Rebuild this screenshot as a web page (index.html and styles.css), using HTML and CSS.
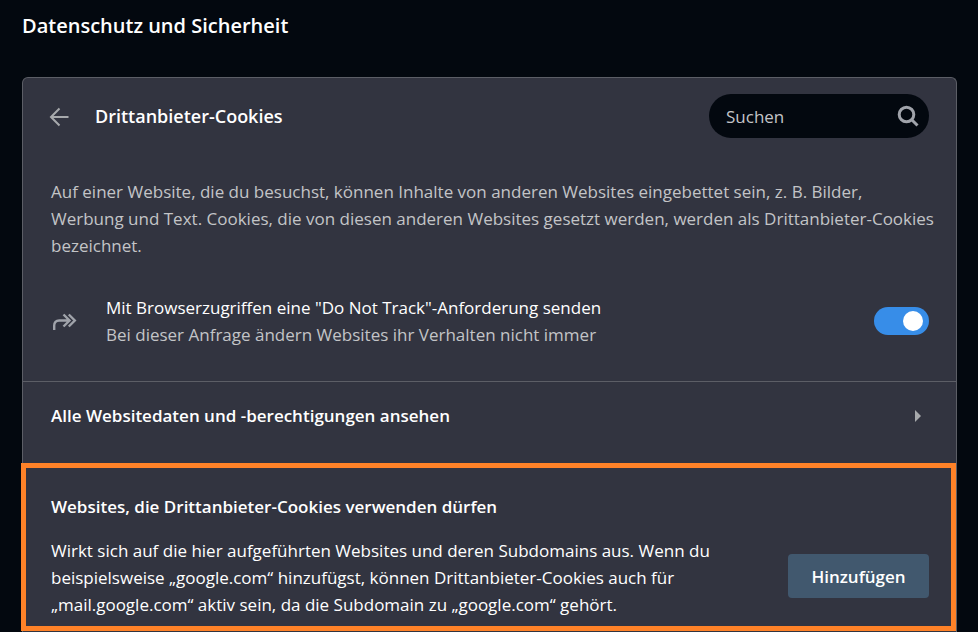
FILE: index.html
```html
<!DOCTYPE html>
<html lang="de">
    <head>
        <meta charset="utf-8">
        <meta name="viewport" content="width=device-width, initial-scale=1">
        <title>Datenschutz und Sicherheit</title>
        <link rel="stylesheet" href="styles.css">
    </head>
    <body>
        <main>
            <h1 class="title">Datenschutz und Sicherheit</h1>
            <div class="card">
                <div class="card-header">
                    <button class="back" type="button" aria-label="Zurück">
                        <svg width="20" height="22" viewBox="0 0 20 22">
                            <path d="M10.500 3.500L2 12L10.500 20.500M2 12H19.500"/>
                        </svg>
                    </button>
                    <h2 class="card-title">Drittanbieter-Cookies</h2>
                    <div class="search">
                        <input class="search-input" type="search" placeholder="Suchen" aria-label="Suchen">
                        <svg class="search-icon" width="22" height="22" viewBox="0 0 22 22">
                            <circle cx="9.500" cy="9.500" r="7.300"/>
                            <path d="M14.500 14.500L20.500 20.500"/>
                        </svg>
                    </div>
                </div>

                <p class="intro">Auf einer Website, die du besuchst, können Inhalte von anderen Websites eingebettet sein, z. B. Bilder, Werbung und Text. Cookies, die von diesen anderen Websites gesetzt werden, werden als Drittanbieter-Cookies bezeichnet.</p>

                <div class="setting">
                    <svg class="setting-icon" width="26" height="20" viewBox="0 0 26 20">
                        <path d="M3.200 19V14.500Q3.200 9.500 8.200 9.500H18M12.500 3.500L18.500 9.500L12.500 15.500M17.800 3.500L23.800 9.500L17.800 15.500"/>
                    </svg>
                    <label class="setting-text" for="do-not-track">
                        <span class="setting-name">Mit Browserzugriffen eine "Do Not Track"-Anforderung senden</span>
                        <span class="setting-hint">Bei dieser Anfrage ändern Websites ihr Verhalten nicht immer</span>
                    </label>
                    <input id="do-not-track" class="toggle" type="checkbox" checked>
                </div>

                <a class="link-row" href="#websitedaten">
                    Alle Websitedaten und -berechtigungen ansehen
                    <svg width="6" height="12" viewBox="0 0 6 12">
                        <path d="M0 0L6 6L0 12Z"/>
                    </svg>
                </a>

                <section class="allowed">
                    <h3 class="allowed-title">Websites, die Drittanbieter-Cookies verwenden dürfen</h3>
                    <div class="allowed-body">
                        <p class="allowed-text">Wirkt sich auf die hier aufgeführten Websites und deren Subdomains aus. Wenn du beispielsweise „google.com“ hinzufügst, können Drittanbieter-Cookies auch für „mail.google.com“ aktiv sein, da die Subdomain zu „google.com“ gehört.</p>
                        <button class="add" type="button">Hinzufügen</button>
                    </div>
                </section>
            </div>
        </main>
    </body>
</html>
```

FILE: styles.css
```css
* {
    box-sizing: border-box;
}

body {
    margin: 0;
    padding: 0 21px 0 22px;
    background: #03080f;
    color: #fff;
    font-family: "Open Sans", "Noto Sans", sans-serif;
    font-size: 17px;
    line-height: 27px;
}

h1, h2, h3, p {
    margin: 0;
}

button, input {
    font: inherit;
    color: inherit;
}

.title {
    padding: 12px 0 38px;
    font-size: 20px;
    font-weight: 600;
}

.card {
    padding-bottom: 1px;
    background: #323440;
    border: 1px solid #5c5e66;
    border-bottom: 0;
    border-radius: 6px 6px 0 0;
}

/* Header */
.card-header {
    display: flex;
    align-items: center;
    padding: 16px 27px 0 26px;
}

.back {
    display: flex;
    padding: 0;
    background: none;
    border: 0;
}

.back svg {
    fill: none;
    stroke: #a7a9ac;
    stroke-width: 2;
}

.card-title {
    flex: 1;
    margin-left: 26px;
    font-size: 18px;
    font-weight: 600;
}

.search {
    display: flex;
    align-items: center;
    width: 220px;
    height: 44px;
    padding: 0 10px 0 17px;
    background: #03080f;
    border-radius: 22px;
}

.search-input {
    flex: 1;
    min-width: 0;
    padding: 0;
    background: none;
    border: 0;
    outline: 0;
}

.search-input::placeholder {
    color: #c3c4c7;
    opacity: 1;
}

.search-icon {
    fill: none;
    stroke: #a0a3aa;
    stroke-width: 3;
}

.intro {
    padding: 40px 18px 0 28px;
    color: #c3c4c7;
}

/* Do Not Track */
.setting {
    display: flex;
    align-items: center;
    padding: 35px 27px 33px 28px;
    border-bottom: 1px solid #5c5e66;
}

.setting-icon {
    fill: none;
    stroke: #a0a3aa;
    stroke-width: 2.4;
}

.setting-text {
    flex: 1;
    margin-left: 29px;
}

.setting-name,
.setting-hint {
    display: block;
}

.setting-hint {
    color: #c3c4c7;
}

.toggle {
    appearance: none;
    display: flex;
    align-items: center;
    width: 55px;
    height: 28px;
    margin: 0;
    padding: 0 6px;
    background: #5c5e66;
    border-radius: 14px;
}

.toggle::before {
    content: "";
    width: 20px;
    height: 20px;
    background: #fff;
    border-radius: 50%;
}

.toggle:checked {
    justify-content: flex-end;
    background: #378de8;
}

/* Site data */
.link-row {
    display: flex;
    align-items: center;
    justify-content: space-between;
    padding: 20px 35px 34px 28px;
    color: inherit;
    font-weight: 600;
    text-decoration: none;
}

.link-row svg {
    fill: #a7a9ac;
}

/* Allowed websites */
.allowed {
    margin-left: -2px;
    padding: 25px 22px 8px 25px;
    border: 5px solid #ff8228;
}

.allowed-title {
    margin-bottom: 17px;
    font-size: 17px;
    font-weight: 600;
}

.allowed-body {
    display: flex;
    align-items: flex-end;
    justify-content: space-between;
    gap: 72px;
}

.allowed-text {
    flex: 1;
}

.add {
    width: 141px;
    height: 44px;
    margin-bottom: 20px;
    padding: 0;
    background: #41586e;
    border: 0;
    border-radius: 4px;
    font-weight: 600;
}
```
